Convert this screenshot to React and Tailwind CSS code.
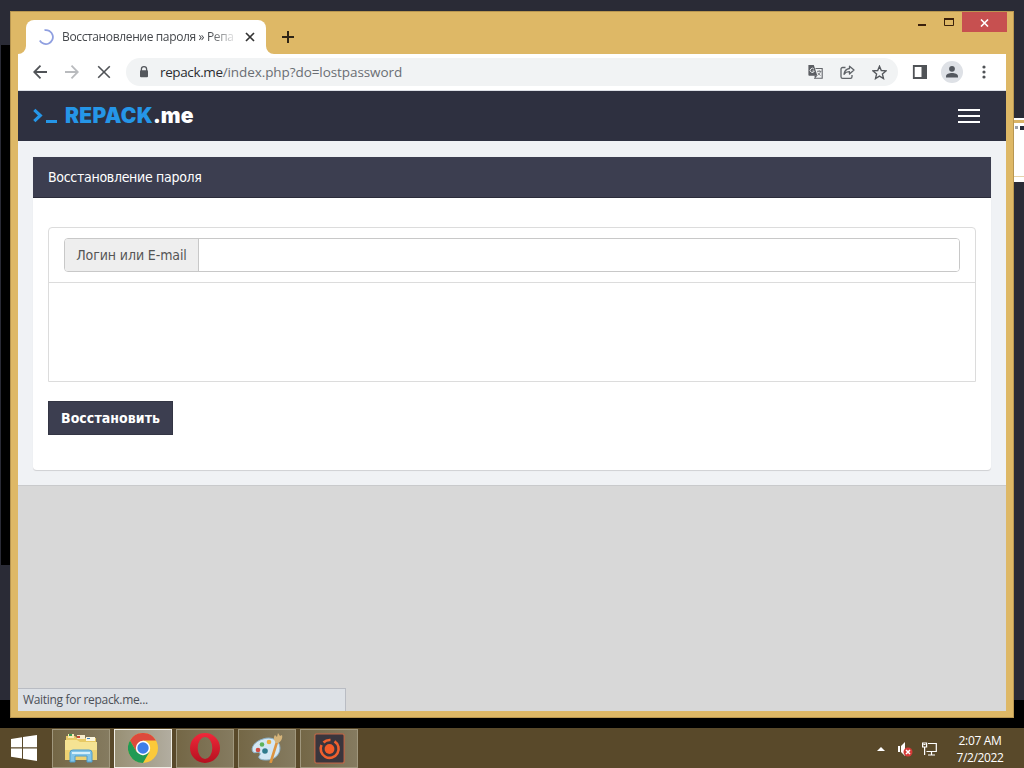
import { useState } from 'react'

const ChromeTab = () => (
  <div className="relative flex h-[34px] w-[240px] items-center rounded-t-[8px] bg-white pl-[12px] pr-[10px] font-['Open_Sans','Noto_Sans',sans-serif]">
    <svg className="absolute -left-[8px] bottom-0 h-[8px] w-[8px]" viewBox="0 0 8 8">
      <path d="M8 0v8H0a8 8 0 0 0 8-8z" fill="#fff" />
    </svg>
    <svg className="absolute -right-[8px] bottom-0 h-[8px] w-[8px]" viewBox="0 0 8 8">
      <path d="M0 0v8h8a8 8 0 0 1-8-8z" fill="#fff" />
    </svg>
    <svg className="h-[16px] w-[16px] shrink-0" viewBox="0 0 16 16" fill="none" stroke="#8f9fe0" strokeWidth="1.8">
      <path d="M6.5 1.2A7 7 0 1 1 1.8 11.5" />
    </svg>
    <div className="ml-[8px] w-[175px] shrink-0 whitespace-nowrap text-[12px] tracking-[-0.36px] text-[#45484c] [mask-image:linear-gradient(to_right,#000_148px,transparent_176px)]">
      Восстановление пароля » Репа
    </div>
    <svg className="ml-[8px] h-[10px] w-[10px] shrink-0" viewBox="0 0 10 10" stroke="#333" strokeWidth="1.7">
      <path d="M1 1l8 8M9 1L1 9" />
    </svg>
  </div>
)

const TitleBar = () => (
  <div className="-mr-px flex h-[42px] items-start">
    <div className="flex h-[42px] grow items-end pl-[8px]">
      <ChromeTab />
      <svg className="mb-[11px] ml-[16px] h-[12px] w-[12px]" viewBox="0 0 12 12" stroke="#2e2416" strokeWidth="2">
        <path d="M6 0v12M0 6h12" />
      </svg>
    </div>
    <svg className="mr-[18px] mt-[12px] h-[2px] w-[8px]" viewBox="0 0 8 2">
      <rect width="8" height="2" fill="#3b210c" />
    </svg>
    <svg className="mr-[8px] mt-[6px] h-[8px] w-[10px]" viewBox="0 0 10 8" fill="none" stroke="#3b210c">
      <path d="M.5 1v6.5h9V1" />
      <path d="M0 1h10" strokeWidth="2" />
    </svg>
    <div className="flex h-[20px] w-[45px] items-center justify-center bg-[#c75050]">
      <svg className="mt-[2px] h-[8px] w-[9px]" viewBox="0 0 9 8" stroke="#fff" strokeWidth="1.6">
        <path d="M1 .5l7 7M8 .5l-7 7" />
      </svg>
    </div>
  </div>
)

const Toolbar = () => (
  <div className="flex h-[37px] items-center border-b border-[#dcdfe6] bg-white pl-[15px]">
    <svg className="h-[14px] w-[14px]" viewBox="0 0 14 14" fill="none" stroke="#505357" strokeWidth="1.8">
      <path d="M14 7H1.5M7.5 .7L1.2 7l6.3 6.3" />
    </svg>
    <svg className="ml-[18px] h-[14px] w-[14px]" viewBox="0 0 14 14" fill="none" stroke="#b9bbbe" strokeWidth="1.8">
      <path d="M0 7h12.5M6.5 .7L12.8 7l-6.3 6.3" />
    </svg>
    <svg className="ml-[18px] h-[14px] w-[14px]" viewBox="0 0 14 14" stroke="#505357" strokeWidth="1.6">
      <path d="M1.2 1.2l11.6 11.6M12.8 1.2L1.2 12.8" />
    </svg>
    <div className="ml-[15px] flex h-[28px] w-[772px] items-center rounded-full bg-[#f1f3f4] pl-[13px]">
      <svg className="h-[12px] w-[10px] shrink-0" viewBox="0 0 10 12">
        <path d="M2.4 5V3a2.6 2.3 0 0 1 5.2 0v2" fill="none" stroke="#54575c" strokeWidth="1.3" />
        <rect x="1" y="4.2" width="8" height="7" rx="1" fill="#54575c" />
      </svg>
      <div className="ml-[11px] w-[648px] whitespace-nowrap font-['Open_Sans',sans-serif] text-[13.5px] tracking-[-0.08px] text-[#6a6e73]">
        <span className="tracking-[-0.38px] text-[#2b2d31]">repack.me</span>/index.php?do=lostpassword
      </div>
      <svg className="h-[14px] w-[15px] shrink-0" viewBox="0 0 15 14">
        <path d="M7.5 3.5h6.7v9.8H6" fill="none" stroke="#63666b" strokeWidth="1.1" />
        <path d="M.4 0h5.4L9.4 10.7H1.2A.8.8 0 0 1 .4 10z" fill="#5b5e63" />
        <path d="M6.4 10.7h2.8L7 13.4z" fill="#5b5e63" />
        <path d="M6 4.2A2.1 2.1 0 1 0 6.3 6H4.4" fill="none" stroke="#f1f3f4" strokeWidth=".9" />
        <path d="M9 6.3h4.4M11.2 5.2v1M12.6 6.3c-.4 1.8-1.6 3-3 4M9.8 7.8c.5 1 1.6 2 2.8 2.7" fill="none" stroke="#63666b" strokeWidth=".8" />
      </svg>
      <svg className="ml-[17px] h-[15px] w-[15px] shrink-0" viewBox="0 0 15 15" fill="none" stroke="#5f6368" strokeWidth="1.3" strokeLinejoin="round">
        <path d="M5.5 2.5H2.6a1.6 1.6 0 0 0-1.6 1.6v7.6a1.6 1.6 0 0 0 1.6 1.6h7.8a1.6 1.6 0 0 0 1.6-1.6V10" />
        <path d="M9.5 1.2l4.5 3.9L9.5 9V6.7C7.3 6.6 5.4 7.4 4 9.3c.3-3 2.2-5.3 5.5-5.8z" />
      </svg>
      <svg className="ml-[17px] h-[15px] w-[15px] shrink-0" viewBox="0 0 15 15" fill="none" stroke="#55585d" strokeWidth="1.35">
        <path d="M7.5 1.2l1.8 4.3 4.7.4-3.6 3.1 1.1 4.5-4-2.4-4 2.4L4.6 9 1 5.9l4.7-.4z" />
      </svg>
    </div>
    <svg className="ml-[14px] h-[14px] w-[15px]" viewBox="0 0 15 14">
      <path d="M1.8 1h12v12h-12z" fill="none" stroke="#505357" strokeWidth="1.8" />
      <path d="M9.5 0H15v14H9.5z" fill="#505357" />
    </svg>
    <svg className="ml-[14px] h-[22px] w-[22px]" viewBox="0 0 22 22">
      <circle cx="11" cy="11" r="11" fill="#dee1e6" />
      <circle cx="11" cy="7.8" r="2.9" fill="#53575e" />
      <path d="M5 16.5v-1.3c0-2 3.2-3.2 6-3.2s6 1.2 6 3.2v1.3z" fill="#53575e" />
    </svg>
    <svg className="ml-[19px] h-[14px] w-[4px]" viewBox="0 0 4 14" fill="#505357">
      <circle cx="2" cy="2" r="1.6" />
      <circle cx="2" cy="7" r="1.6" />
      <circle cx="2" cy="12" r="1.6" />
    </svg>
  </div>
)

const SiteHeader = () => (
  <header className="flex h-[50px] items-center justify-between bg-[#2e3040] pl-[15px] pr-[26px]">
    <div className="flex items-center">
      <svg className="h-[16px] w-[26px]" viewBox="0 0 26 16">
        <path d="M1.3 1.8L7.3 7.5l-6 5.7" fill="none" stroke="#2596e8" strokeWidth="3.2" />
        <rect x="13" y="12" width="11" height="3" fill="#2596e8" />
      </svg>
      <div className="-mt-px ml-[6px] whitespace-nowrap font-['Inter',sans-serif] text-[21px] font-black leading-none tracking-[0.15px] text-white">
        <span className="tracking-[0.3px] text-[#2596e8]">REPACK</span>.me
      </div>
    </div>
    <div className="flex flex-col gap-[4px]">
      <span className="h-[2px] w-[22px] bg-white" />
      <span className="h-[2px] w-[22px] bg-white" />
      <span className="h-[2px] w-[22px] bg-white" />
    </div>
  </header>
)

const RestoreForm = () => {
  const [login, setLogin] = useState('')

  return (
    <div className="h-[344px] bg-[#f0f2f5] px-[15px] pt-[16px]">
      <div className="h-[314px] rounded-b-[4px] border-b border-[#d2d3d6] bg-white font-['DejaVu_Sans_Condensed','Noto_Sans',sans-serif] shadow-[0_0_1px_#ddd]">
        <h4 className="flex h-[41px] items-center border-b border-[#2b2c3a] bg-[#3c3e50] pl-[15px] text-[14px] tracking-[-0.3px] text-white">
          Восстановление пароля
        </h4>
        <div className="px-[15px] pt-[29px]">
          <div className="h-[155px] rounded-t-[4px] border border-[#dcdcdc]">
            <div className="h-[55px] border-b border-[#dcdcdc] px-[15px] pt-[10px]">
              <div className="flex h-[34px] overflow-hidden rounded-[4px] border border-[#c8c8c8]">
                <span className="flex w-[134px] items-center justify-center border-r border-[#c8c8c8] bg-[#eee] text-[14px] tracking-[-0.1px] text-[#555]">
                  Логин или E-mail
                </span>
                <input
                  className="grow bg-white px-3 text-sm outline-none"
                  value={login}
                  onChange={(e) => setLogin(e.target.value)}
                />
              </div>
            </div>
          </div>
          <button className="mt-[19px] h-[34px] w-[125px] border border-[#333544] bg-[#3c3e50] text-[14px] font-bold tracking-[0.05px] text-white">
            Восстановить
          </button>
        </div>
      </div>
    </div>
  )
}

const ExplorerIcon = () => (
  <svg className="h-[30px] w-[34px]" viewBox="0 0 34 30">
    <path d="M2 3h9l2 2h19v22H2z" fill="#e7c964" />
    <path d="M4 1h6v4H4z" fill="#f8eab0" />
    <path d="M5 1h3v2H5z" fill="#3a9b4f" />
    <path d="M13 2h8v4h-8z" fill="#f6eccb" />
    <path d="M13 3h3v2h-3z" fill="#c94b35" />
    <path d="M22 4h9v4h-9z" fill="#fbf6df" />
    <path d="M23 5h3v1h-3z" fill="#4386bd" />
    <path d="M1 7h12l3 2h17v18H1z" fill="#f5e393" />
    <path d="M1 17h32v10H1z" fill="#edd172" />
    <path d="M6 29V19.5q0-2.5 3-2.5h16q3 0 3 2.5V29h-5v-6H11v6z" fill="#83c5e8" stroke="#4e9ccb" />
    <path d="M8 20h18" stroke="#d5effa" strokeWidth="2" />
  </svg>
)

const ChromeIcon = () => (
  <svg className="h-[30px] w-[30px]" viewBox="0 0 30 30">
    <circle cx="15" cy="15" r="15" fill="#fbc93a" />
    <path d="M2 7.5A15 15 0 0 1 28 7.5H15L8.5 18.8z" fill="#dd4a3d" />
    <path d="M2 7.5A15 15 0 0 0 15 30l6.5-11.3-6.5 3.8-6.5-3.7z" fill="#219a55" />
    <circle cx="15" cy="15" r="7.2" fill="#fff" />
    <circle cx="15" cy="15" r="5.7" fill="#3f7ee8" />
  </svg>
)

const OperaIcon = () => (
  <svg className="h-[30px] w-[30px]" viewBox="0 0 30 30">
    <defs>
      <linearGradient id="opera" x1="0" y1="0" x2="0" y2="1">
        <stop offset="0" stopColor="#f0283a" />
        <stop offset="1" stopColor="#b5101f" />
      </linearGradient>
    </defs>
    <path
      fillRule="evenodd"
      d="M15 0a15 15 0 1 0 0 30 15 15 0 0 0 0-30zM15 4a7.3 11 0 1 1 0 22 7.3 11 0 0 1 0-22z"
      fill="url(#opera)"
    />
  </svg>
)

const PaintIcon = () => (
  <svg className="h-[30px] w-[32px]" viewBox="0 0 32 30">
    <path d="M12 6C20 3 29 7 29 15c0 7-6 12-13 12-3 0-6 0-8-2-1-2 2-3 1-5-2-2-5 1-7-1-3-4 2-11 10-13z" fill="#d3e7f4" stroke="#8bb0c8" />
    <circle cx="7" cy="17" r="2.3" fill="#d14c44" />
    <circle cx="11" cy="11.5" r="2.3" fill="#5eb35a" />
    <circle cx="18" cy="9" r="2.3" fill="#ecae3e" />
    <circle cx="14" cy="18" r="2.8" fill="#2f7a8c" />
    <path d="M26 9L19.5 30" stroke="#dc9440" strokeWidth="2.6" />
    <path d="M25 10c-2-3-3-5-1-8l2 2 1-4 2 3 2-1c1 3-1 7-4 8z" fill="#d6b47a" />
  </svg>
)

const RecorderIcon = () => (
  <svg className="h-[31px] w-[31px]" viewBox="0 0 31 31">
    <rect x=".8" y=".8" width="29.4" height="29.4" rx="2" fill="#3a353d" stroke="#b96848" strokeWidth="1.3" />
    <circle cx="15.5" cy="16" r="4.9" fill="#f45c28" />
    <path d="M20.5 8.3A9 9 0 1 1 7.5 12M9.5 9.5A9 9 0 0 1 16.500 7" fill="none" stroke="#f0602e" strokeWidth="2.6" />
  </svg>
)

const taskbarApps = [
  { name: 'explorer', Icon: ExplorerIcon },
  { name: 'chrome', Icon: ChromeIcon, active: true },
  { name: 'opera', Icon: OperaIcon },
  { name: 'paint', Icon: PaintIcon },
  { name: 'recorder', Icon: RecorderIcon }
]

const Taskbar = () => (
  <div className="absolute bottom-0 left-0 flex h-[40px] w-full items-center bg-[#59492a]">
    <svg className="ml-[11px] h-[26px] w-[26px]" viewBox="0 0 26 26" fill="#fff">
      <path d="M0 4l11-1.7v10H0zM12 2.1L26 0v12.3H12zM0 13.4h11v10L0 21.7zM12 13.4h14V26l-14-2.3z" />
    </svg>
    <div className="ml-[15px] flex gap-[4px]">
      {taskbarApps.map(({ name, Icon, active }) => (
        <div
          key={name}
          className={
            active
              ? 'flex h-[39px] w-[58px] items-center justify-center border border-[#f0eee6] bg-linear-to-r from-[#989075] to-[#b2ada0]'
              : 'flex h-[39px] w-[58px] items-center justify-center border border-[#a0977d] bg-linear-to-r from-[#746746] to-[#857b60]'
          }
        >
          <Icon />
        </div>
      ))}
    </div>
    <div className="ml-auto flex items-center pr-[20px]">
      <svg className="mt-[2px] h-[4px] w-[8px]" viewBox="0 0 8 4" fill="#fff">
        <path d="M4 0l4 4H0z" />
      </svg>
      <svg className="ml-[13px] mt-[2px] h-[16px] w-[15px]" viewBox="0 0 15 16">
        <path d="M0 5h2v6H0zM3 5l4-4v14l-4-4z" fill="#fff" />
        <circle cx="10" cy="11" r="4.5" fill="#d63b38" />
        <path d="M8 9l4 4M12 9l-4 4" stroke="#fff" strokeWidth="1.5" />
      </svg>
      <svg className="ml-[9px] mt-[2px] h-[14px] w-[15px]" viewBox="0 0 15 14" fill="none" stroke="#fff" strokeWidth="1.2">
        <path d="M6 1.5h8.3v8H4.5M9.5 9.5v3M6 13h7" />
        <path d="M.6 1h4v4H.6zM2.6 5v8M1.5 2.5h2" />
      </svg>
      <div className="ml-[19px] mt-[2px] w-[48px] whitespace-nowrap text-center font-['Open_Sans',sans-serif] text-[12px] leading-[17px] tracking-[-0.35px] text-white">
        <div>2:07 AM</div>
        <div>7/2/2022</div>
      </div>
    </div>
  </div>
)

const BrowserWindow = () => (
  <div className="absolute left-[10px] top-[11px] flex h-[707px] w-[1004px] flex-col border border-[#b89651] bg-[#deb866] px-[7px] pb-[6px]">
    <TitleBar />
    <div className="relative flex grow flex-col bg-[#d8d8d8]">
      <Toolbar />
      <SiteHeader />
      <RestoreForm />
      <div className="border-t border-[#c9cacc]" />
      <div className="absolute bottom-0 left-0 flex h-[23px] w-[328px] items-center border-r border-t border-[#b9bcc3] bg-[#dde1e6] pl-[5px] font-['Open_Sans',sans-serif] text-[12px] tracking-[-0.32px] text-[#4c5057]">
        Waiting for repack.me...
      </div>
    </div>
  </div>
)

const App = () => {
  return (
    <div className="relative h-[768px] w-[1024px] overflow-hidden bg-black">
      <div className="absolute left-0 top-0 h-[700px] w-full bg-[#2a2b36]" />
      <div className="absolute left-[1px] top-[45px] h-[520px] w-[12px] bg-black" />
      {/* window peeking out from behind on the right */}
      <div className="absolute left-[1012px] top-[118px] h-[64px] w-[12px] bg-white pt-[2px]">
        <div className="h-[3px] bg-[#d9b365]" />
        <div className="mt-[3px] flex gap-[2px] pl-[3px]">
          <span className="h-[3px] w-[3px] bg-[#9ba1aa]" />
          <span className="h-[4px] w-[4px] bg-[#252a38]" />
        </div>
        <div className="mt-[46px] h-[1px] bg-[#e5d3ab]" />
      </div>
      <BrowserWindow />
      <Taskbar />
    </div>
  )
}

export default App
